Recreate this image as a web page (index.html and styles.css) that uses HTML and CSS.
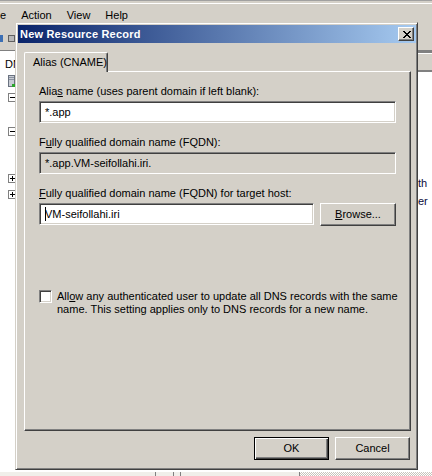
FILE: index.html
```html
<!DOCTYPE html>
<html>
<head>
<meta charset="utf-8">
<title>New Resource Record</title>
<link rel="stylesheet" href="styles.css">
</head>
<body>
<div class="screen">
  <div class="mmc">
    <div class="frame-top"></div>
    <div class="menubar">
      <span class="menu-item">e</span>
      <span class="menu-item">Action</span>
      <span class="menu-item">View</span>
      <span class="menu-item">Help</span>
    </div>
    <div class="toolbar">
      <span class="tb-blue"></span>
      <span class="tb-grey"></span>
    </div>
    <div class="panes">
      <div class="tree">
        <div class="tree-root">DNS</div>
        <svg class="tree-server" width="7" height="12" viewBox="0 0 7 12">
          <rect x="0.5" y="0.5" width="6" height="11" fill="#c8ccd4" stroke="#6a7280"/>
          <rect x="1" y="2" width="5" height="1" fill="#8a92a0"/>
          <rect x="1" y="4" width="5" height="1" fill="#8a92a0"/>
          <rect x="4" y="9" width="3" height="3" fill="#2aa52a"/>
        </svg>
        <svg class="expander ex1" width="9" height="9" viewBox="0 0 9 9"><rect x="0.5" y="0.5" width="8" height="8" fill="#fff" stroke="#808080"/><path d="M2 4.5h5" stroke="#000"/></svg>
        <svg class="expander ex2" width="9" height="9" viewBox="0 0 9 9"><rect x="0.5" y="0.5" width="8" height="8" fill="#fff" stroke="#808080"/><path d="M2 4.5h5" stroke="#000"/></svg>
        <svg class="expander ex3" width="9" height="9" viewBox="0 0 9 9"><rect x="0.5" y="0.5" width="8" height="8" fill="#fff" stroke="#808080"/><path d="M2 4.5h5M4.5 2v5" stroke="#000"/></svg>
        <svg class="expander ex4" width="9" height="9" viewBox="0 0 9 9"><rect x="0.5" y="0.5" width="8" height="8" fill="#fff" stroke="#808080"/><path d="M2 4.5h5M4.5 2v5" stroke="#000"/></svg>
      </div>
      <div class="list">
        <div class="list-header"></div>
        <div class="list-body">
          <div class="list-line">th</div>
          <div class="list-line">er</div>
        </div>
      </div>
    </div>
    <div class="statusbar">
      <div class="sb-left"><span class="sb-sep s1"></span><span class="sb-sep s2"></span><span class="sb-sep s3"></span></div>
      <div class="sb-right"></div>
    </div>
  </div>

  <div class="dialog">
    <div class="titlebar">
      <span class="title">New Resource Record</span>
      <span class="close-btn">
        <svg width="8" height="7" viewBox="0 0 8 7" shape-rendering="crispEdges">
          <path d="M0 0h2v1h-2zM6 0h2v1h-2zM1 1h2v1h-2zM5 1h2v1h-2zM2 2h4v1h-4zM3 3h2v1h-2zM2 4h4v1h-4zM1 5h2v1h-2zM5 5h2v1h-2zM0 6h2v1h-2zM6 6h2v1h-2z" fill="#000"/>
        </svg>
      </span>
    </div>
    <div class="dlg-body">
      <div class="tabs">
        <div class="tab">Alias (CNAME)</div>
      </div>
      <div class="panel">
        <div class="field">
          <div class="label">Alia<u>s</u> name (uses parent domain if left blank):</div>
          <div class="edit">*.app</div>
        </div>
        <div class="field">
          <div class="label">F<u>u</u>lly qualified domain name (FQDN):</div>
          <div class="edit readonly">*.app.VM-seifollahi.iri.</div>
        </div>
        <div class="field">
          <div class="label"><u>F</u>ully qualified domain name (FQDN) for target host:</div>
          <div class="edit-row">
            <div class="edit target"><span class="caret"></span>VM-seifollahi.iri</div>
            <div class="button browse"><u>B</u>rowse...</div>
          </div>
        </div>
        <div class="check-row">
          <span class="checkbox"></span>
          <span class="check-text">All<u>o</u>w any authenticated user to update all DNS records with the same<br>name. This setting applies only to DNS records for a new name.</span>
        </div>
      </div>
      <div class="buttons">
        <div class="button default">OK</div>
        <div class="button">Cancel</div>
      </div>
    </div>
  </div>
</div>
</body>
</html>
```
FILE: styles.css
```css
* { box-sizing: border-box; }
html, body { margin: 0; padding: 0; }
body {
  width: 432px;
  height: 476px;
  overflow: hidden;
  font-family: "Liberation Sans", Arial, sans-serif;
  font-size: 11px;
  color: #000;
  background: #d4d0c8;
}
u { text-underline-offset: 1px; }

.screen { position: relative; width: 432px; height: 476px; overflow: hidden; }

/* background MMC window */
.mmc { display: flex; flex-direction: column; height: 476px; }
.frame-top { height: 4px; border-top: 1px solid #a0a0a0; border-bottom: 1px solid #fff; flex: none; }
.menubar { height: 21px; flex: none; display: flex; gap: 15px; line-height: 20px; padding-top: 1px; }
.toolbar { height: 26px; flex: none; border-bottom: 1px solid #808080; display: flex; align-items: flex-start; padding-top: 10px; }
.tb-blue { width: 3px; height: 7px; background: #3c6fb4; }
.tb-grey { width: 7px; height: 7px; margin-left: 5px; background: #b8b8b8; border: 1px solid #606060; }

.panes { height: 420px; flex: none; display: flex; }
.tree { width: 418px; background: #fff; padding: 5px 0 0 5px; display: flex; flex-direction: column; align-items: flex-start; }
.tree-root { line-height: 16px; height: 16px; }
.tree-server { margin: 3px 0 0 3px; display: block; }
.expander { display: block; margin-left: 3px; }
.ex1 { margin-top: 6px; }
.ex2 { margin-top: 25px; }
.ex3 { margin-top: 38px; }
.ex4 { margin-top: 7px; }

.list { flex: 1; display: flex; flex-direction: column; background: #fff; }
.list-header { height: 21px; background: #d4d0c8; border-top: 2px solid #808080; border-bottom: 2px solid #808080; box-shadow: inset 0 1px #fff; flex: none; }
.list-body { padding-top: 102px; }
.list-line { line-height: 18px; white-space: nowrap; color: #0a0a3a; }

.statusbar { height: 5px; flex: none; display: flex; border-top: 1px solid #fff; }
.sb-left { flex: 1; display: flex; background: #f0efea; }
.sb-sep { width: 1px; background: #808080; }
.s1 { margin-left: 155px; }
.s2 { margin-left: 17px; }
.s3 { margin-left: 6px; }
.sb-right {
  width: 133px;
  border-left: 1px solid #808080;
  background: repeating-conic-gradient(#c8c4bc 0 25%, #fff 0 50%) 0 0 / 2px 2px;
}

/* dialog */
.dialog {
  position: absolute;
  left: 15px;
  top: 22px;
  width: 403px;
  height: 448px;
  background: #d4d0c8;
  border: 1px solid;
  border-color: #d4d0c8 #404040 #404040 #d4d0c8;
  box-shadow: inset 1px 1px #fff, inset -1px -1px #808080;
  padding: 2px 1px 2px 2px;
  display: flex;
  flex-direction: column;
}
.titlebar {
  height: 18px;
  flex: none;
  display: flex;
  align-items: center;
  justify-content: space-between;
  padding: 0 2px 0 2px;
  background: linear-gradient(to right, #0a246a, #a6caf0);
}
.title { color: #fff; font-weight: bold; font-size: 11px; line-height: 18px; letter-spacing: 0.2px; }
.close-btn {
  width: 16px;
  height: 14px;
  display: flex;
  align-items: center;
  justify-content: center;
  padding-left: 1px;
  background: #d4d0c8;
  border: 1px solid;
  border-color: #fff #404040 #404040 #fff;
  box-shadow: inset -1px -1px #808080;
}
.close-btn svg { display: block; }

.dlg-body { flex: 1; display: flex; flex-direction: column; padding: 9px 5px 7px 6px; }
.tabs { display: flex; height: 19px; flex: none; position: relative; z-index: 1; }
.tab {
  width: 84px;
  height: 20px;
  padding: 3px 0 0 8px;
  line-height: 13px;
  background: #d4d0c8;
  border-top: 1px solid #fff;
  border-left: 1px solid #fff;
  border-right: 1px solid #404040;
  box-shadow: inset -1px 0 #808080;
  border-radius: 2px 2px 0 0;
}
.panel {
  flex: 1;
  background: #d4d0c8;
  border: 1px solid;
  border-color: #fff #404040 #404040 #fff;
  box-shadow: inset -1px -1px #808080;
  padding: 13px 14px 0 14px;
  display: flex;
  flex-direction: column;
}
.field { display: flex; flex-direction: column; margin-bottom: 13px; }
.label { line-height: 13px; margin-bottom: 3px; white-space: nowrap; }
.edit {
  height: 22px;
  background: #fff;
  border: 1px solid;
  border-color: #808080 #fff #fff #808080;
  box-shadow: inset 1px 1px #404040, inset -1px -1px #d4d0c8;
  padding: 0 4px 0 5px;
  line-height: 20px;
  white-space: nowrap;
  overflow: hidden;
}
.edit.readonly { background: #d4d0c8; }
.edit-row { display: flex; gap: 6px; }
.edit.target { width: 275px; padding-left: 5px; }
.caret {
  display: inline-block;
  width: 1px;
  height: 14px;
  background: #000;
  vertical-align: -3px;
  margin-right: -1px;
}
.button {
  width: 75px;
  height: 23px;
  display: flex;
  align-items: center;
  justify-content: center;
  background: #d4d0c8;
  border: 1px solid;
  border-color: #fff #404040 #404040 #fff;
  box-shadow: inset -1px -1px #808080;
  line-height: 13px;
}
.button.browse { width: 76px; }
.button.default {
  border: 1px solid #000;
  box-shadow: inset 1px 1px #fff, inset -1px -1px #404040, inset -2px -2px #808080;
}
.check-row { display: flex; align-items: flex-start; margin-top: 51px; }
.checkbox {
  width: 13px;
  height: 13px;
  flex: none;
  background: #fff;
  border: 1px solid;
  border-color: #808080 #fff #fff #808080;
  box-shadow: inset 1px 1px #404040, inset -1px -1px #d4d0c8;
  margin-right: 5px;
}
.check-text { line-height: 13px; white-space: nowrap; }
.buttons { display: flex; justify-content: flex-end; gap: 6px; margin-top: 6px; padding-right: 1px; flex: none; }
```
